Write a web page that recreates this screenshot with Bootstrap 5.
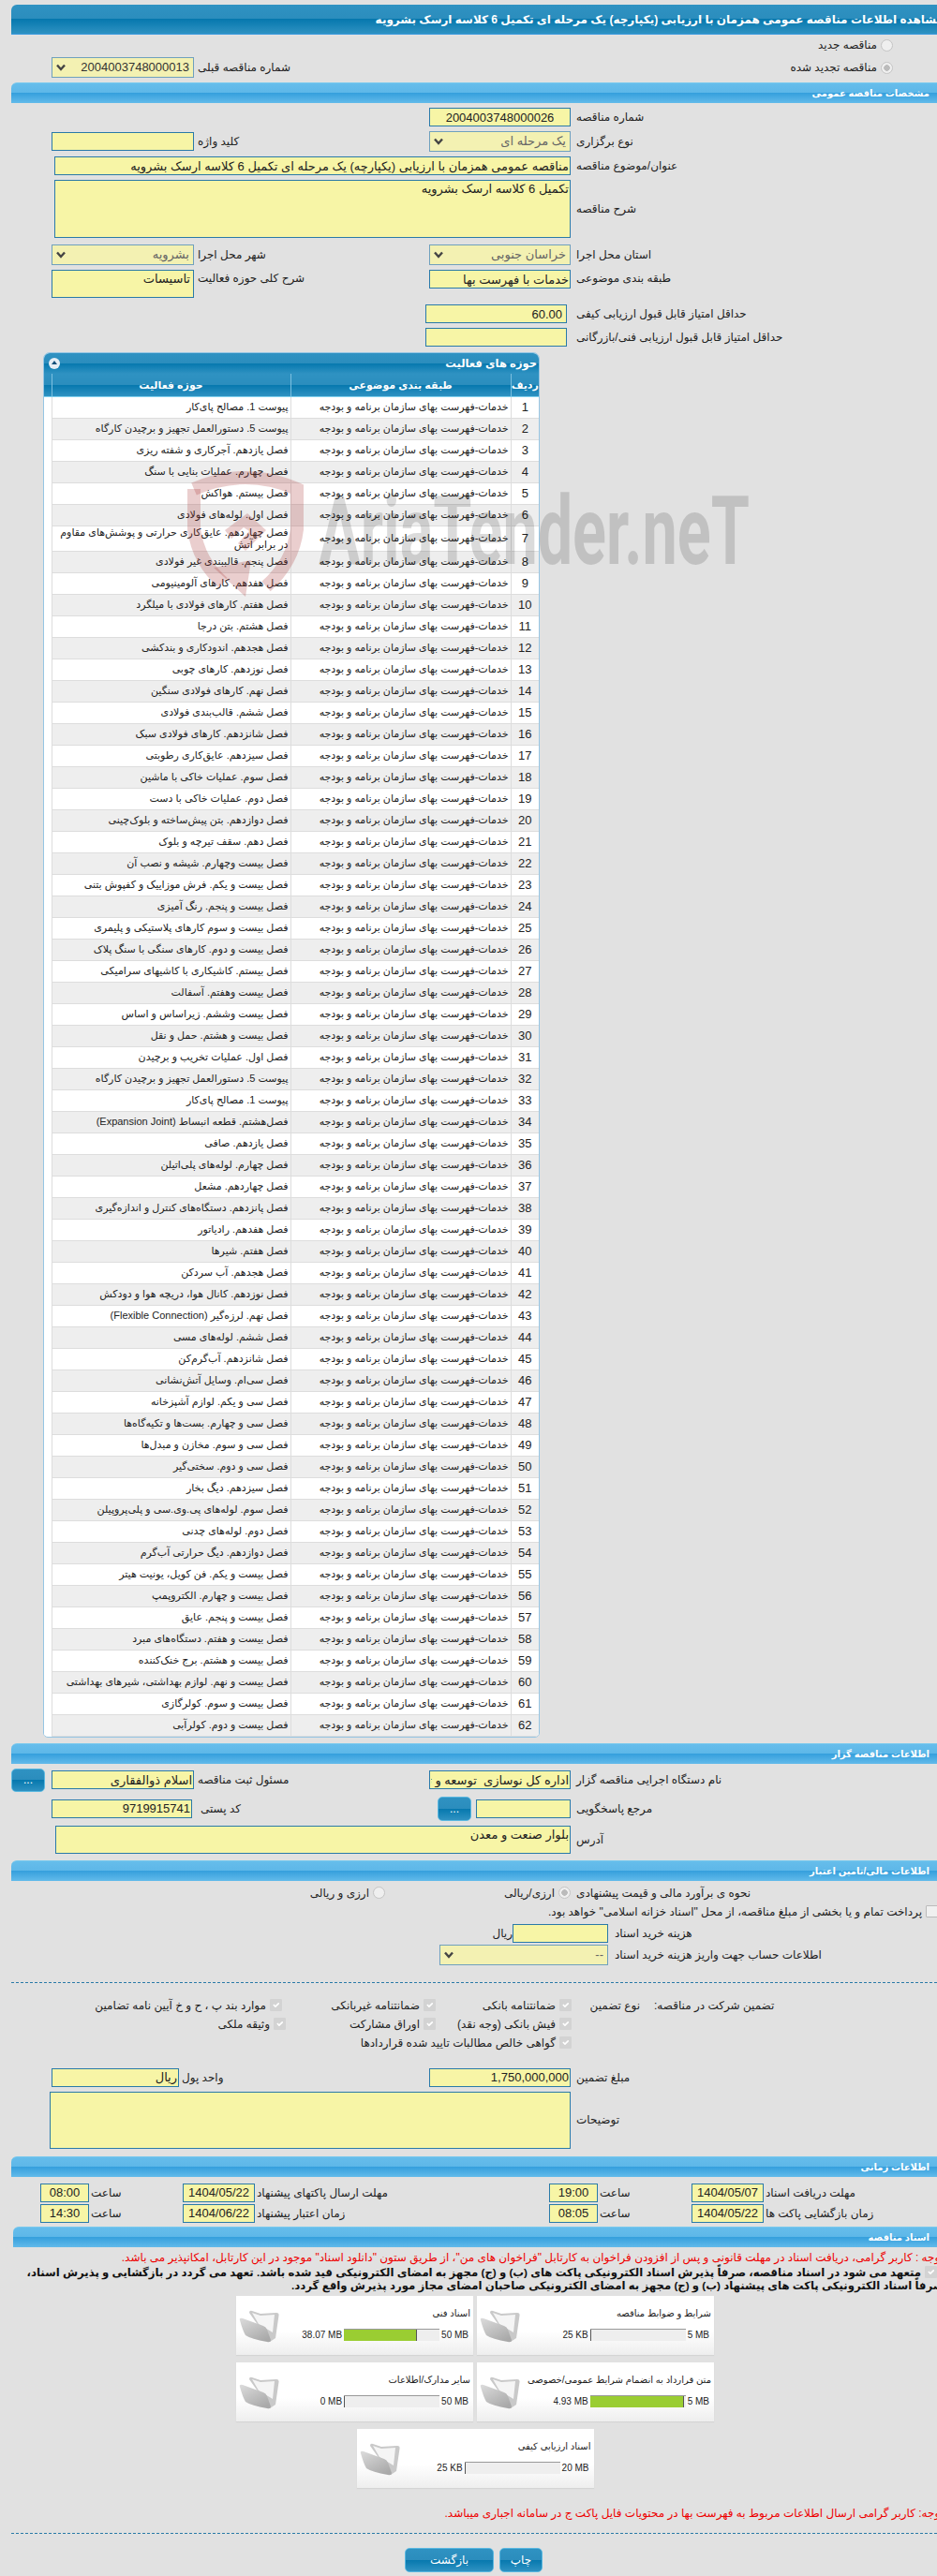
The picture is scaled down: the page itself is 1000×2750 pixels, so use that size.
<!DOCTYPE html>
<html lang="fa" dir="rtl">
<head>
    <meta charset="UTF-8">
    <meta name="viewport" content="width=device-width, initial-scale=1.0">
    <title>مشاهده اطلاعات مناقصه</title>
    <link rel="stylesheet" href="https://cdn.jsdelivr.net/npm/bootstrap@5.3.3/dist/css/bootstrap.min.css">
    <style>
        body { background: #e1e1e1; font-family: "Liberation Sans", "DejaVu Sans", sans-serif; font-size: 12px; color: #222; overflow-x: hidden; }
        .sheet { margin-left: 12px; padding-top: 5px; height: 2750px; overflow: hidden; }

        .bar-dark, .bar-light, .btn-site, .grid-head th, .panel-title { color: #fff; font-weight: bold; }
        .bar-dark, .grid-head th, .panel-title, .btn-site { background: linear-gradient(#2f92c2 0, #2b8dbd 49%, #0678ae 50%, #2f92c2 100%); }
        .bar-light { background: linear-gradient(#66bdeb 0, #5db7e8 49%, #36a0dd 50%, #62baea 100%); border-top: 1px solid #78c9ee; height: 22px; line-height: 21px; padding-right: 8px; border-radius: 6px 0 0 0; font-size: 10px; }
        .bar-dark { height: 32px; line-height: 32px; border-radius: 6px 0 0 0; font-size: 12px; white-space: nowrap; border-bottom: 1px solid #3a9be0; }
        .bar-docs { margin-left: 2px; }

        .frm-row { display: flex; align-items: center; }
        .lbl { margin: 0; text-align: left; flex: none; white-space: nowrap; }
        .la { width: 391px; padding-left: 6px; }
        .lb { width: 251px; padding-left: 4px; }
        .fld.form-control, .fld.form-select { flex: none; height: 20px; min-height: 0; padding: 0 1px; border-radius: 0; border: 1px solid #2a7aa8; background-color: #f7f5a6; color: #222; font-size: 13px; line-height: 18px; box-shadow: none; opacity: 1; }
        textarea.fld.form-control { resize: none; }
        .fld.form-select { height: 22px; padding: 0 4px 0 16px; border-color: #6fa0bd; background-color: #f3f1b2; color: #666; background-size: 12px 10px; background-position: left 3px center; background-image: url("data:image/svg+xml,%3csvg xmlns='http://www.w3.org/2000/svg' viewBox='0 0 12 10'%3e%3cpath fill='none' stroke='%23444' stroke-width='2.4' d='M2 2.5l4 4.5 4-4.5'/%3e%3c/svg%3e"); }
        .w52 { width: 52px; } .w77 { width: 77px; } .w101 { width: 101px; } .w102 { width: 102px; } .w136 { width: 136px; } .w150 { width: 150px; }
        .w151 { width: 151px; } .w152 { width: 152px; } .w180 { width: 180px; } .w550 { width: 550px; } .w551 { width: 551px; } .w556 { width: 556px; }
        .lbl-time { width: 100px; padding-left: 2px; }

        .rad.form-check-input, .tick.form-check-input { flex: none; margin: 0; width: 13px; height: 13px; opacity: 1; background-color: #efefef; border: 1px solid #c4c4c4; }
        .rad.form-check-input:checked { background-image: radial-gradient(#bbb 0 3px, #efefef 3.5px); }
        .tick.form-check-input { border-radius: 1px; background-color: #d3d3d3; border-color: #d3d3d3; }
        .tick.plain.form-check-input { background-color: #f0f0f0; border-color: #bbb; }

        .btn-site { border: 1px solid #5ab8e0; border-radius: 5px; padding: 0; font-size: 12px; font-weight: normal; flex: none; }
        .btn-site:hover { color: #fff; }
        .dots { width: 36px; height: 25px; }

        .t2 { margin-top: 2px; } .t3 { margin-top: 3px; } .t4 { margin-top: 4px; } .t5 { margin-top: 5px; } .t6 { margin-top: 6px; } .t7 { margin-top: 7px; } .t8 { margin-top: 8px; }
        .t12 { margin-top: 12px; } .t14 { margin-top: 14px; } .t15 { margin-top: 15px; } .t17 { margin-top: 17px; } .t18 { margin-top: 18px; }
        .hh20 { height: 20px; } .hh22 { height: 22px; } .hh25 { height: 25px; } .hh26 { height: 26px; }
        .dash { border-top: 1px dashed #2a7aa8; }

        .panel-box { width: 530px; margin-right: 424px; border: 1px solid #96c5e3; border-radius: 7px 7px 5px 5px; background: #fff; overflow: hidden; }
        .panel-title { height: 22px; line-height: 21px; padding-right: 2px; display: flex; justify-content: space-between; align-items: center; font-size: 11.5px; }
        .knob { width: 12px; height: 12px; margin-left: 5px; border-radius: 50%; background: #e6eef5; position: relative; }
        .knob::after { content: ""; position: absolute; left: 3px; top: 3px; border: 3px solid transparent; border-top: 0; border-bottom: 4px solid #15507a; }
        .grid-tbl { table-layout: fixed; width: 528px; margin: 0; border-collapse: collapse; font-size: 11px; }
        .grid-head th { height: 24px; padding: 0; text-align: center; white-space: nowrap; border-left: 1px solid #7cc0e0; border-bottom: 1px solid #7fd0ee; vertical-align: middle; font-size: 11px; }
        .grid-head th:last-child { border-left: 0; }
        .grid-tbl td { height: 23px; padding: 0 2px; line-height: 13px; border-bottom: 1px solid #ddd; border-left: 1px solid #ddd; background: #fff; }
        .grid-tbl tr:nth-child(even) td { background: #eee; }
        .grid-tbl td.num { text-align: center; font-size: 13px; }
        .grid-tbl tr td.edge { background: #fff; border: 0; }

        .chk-head { width: 302px; text-align: left; flex: none; }
        .chk-type { width: 88px; padding-right: 15px; flex: none; }
        .chk-gap { width: 390px; flex: none; }
        .chk-item { display: flex; align-items: center; gap: 4px; flex: none; white-space: nowrap; }
        .c145 { width: 145px; } .c160 { width: 160px; } .c164 { width: 164px; }

        .cut-right { display: block; margin-right: -7px; }
        .note-red { color: #e00; white-space: nowrap; line-height: 18px; }
        .note-bold { font-weight: bold; font-size: 11.7px; line-height: 14px; color: #111; white-space: nowrap; }
        .note-bold .tick { display: inline-block; vertical-align: -2px; margin-left: 4px; }
        .doc-wrap { display: flex; flex-wrap: wrap; justify-content: center; gap: 8px 4px; width: 510px; margin-right: 238px; margin-top: 4px; }
        .doc-card { width: 253px; height: 63px; background: linear-gradient(#fff 0, #fff 60%, #eee 100%); box-shadow: 0 1px 1px #d4d4d4; position: relative; padding: 12px 3px 0 0; font-size: 10px; line-height: 14px; }
        .doc-meter { display: flex; align-items: center; margin-top: 9px; padding-right: 2px; gap: 2px; }
        .doc-meter .ends { direction: ltr; white-space: nowrap; }
        .doc-bar.progress { width: 102px; height: 13px; border-radius: 0; background: #eee; border-top: 1px solid #999; flex: none; }
        .doc-bar .progress-bar { background: #9acd32; border-right: 1px solid #555; }
        .doc-folder { position: absolute; left: 3px; top: 13px; }
        .btn-back { width: 95px; height: 26px; }
        .btn-print { width: 46px; height: 26px; margin-right: 421px; }
        .foot-btns { display: flex; gap: 6px; }

        .water { position: absolute; left: 0; top: 0; pointer-events: none; }
        .water text { font-family: Roboto, sans-serif; font-weight: 700; }
    </style>
</head>
<body onload="displayRows(); displayDocs();">
    <div class="sheet">
        <div class="bar-dark"><span class="cut-right">مشاهده اطلاعات مناقصه عمومی همزمان با ارزیابی (یکپارچه) یک مرحله ای تکمیل 6 کلاسه ارسک بشرویه</span></div>

        <div class="frm-row hh22">
            <div class="chk-item" style="margin-right:47px"><input class="rad form-check-input" type="radio" disabled><span>مناقصه جدید</span></div>
        </div>
        <div class="frm-row hh22 t2">
            <div class="chk-item" style="margin-right:47px;width:344px"><input class="rad form-check-input" type="radio" checked disabled><span>مناقصه تجدید شده</span></div>
            <div class="lbl" style="width:402px;padding-left:4px">شماره مناقصه قبلی</div>
            <select class="fld form-select w152" disabled style="color:#333"><option>2004003748000013</option></select>
        </div>

        <div class="bar-light t5">مشخصات مناقصه عمومی</div>

        <div class="frm-row hh20 t5"><label class="lbl la">شماره مناقصه</label><input class="fld form-control w151 text-center" value="2004003748000026"></div>
        <div class="frm-row hh22 t5">
            <label class="lbl la">نوع برگزاری</label><select class="fld form-select w151" disabled><option>یک مرحله ای</option></select>
            <label class="lbl lb">کلید واژه</label><input class="fld form-control w152">
        </div>
        <div class="frm-row hh20 t5"><label class="lbl la">عنوان/موضوع مناقصه</label><input class="fld form-control w551" value="مناقصه عمومی همزمان با ارزیابی (یکپارچه) یک مرحله ای تکمیل 6 کلاسه ارسک بشرویه"></div>
        <div class="frm-row t5"><label class="lbl la">شرح مناقصه</label><textarea class="fld form-control w551" style="height:62px">تکمیل 6 کلاسه ارسک بشرویه</textarea></div>
        <div class="frm-row hh22 t7">
            <label class="lbl la">استان محل اجرا</label><select class="fld form-select w151" disabled><option>خراسان جنوبی</option></select>
            <label class="lbl lb">شهر محل اجرا</label><select class="fld form-select w152" disabled><option>بشرویه</option></select>
        </div>
        <div class="frm-row t5 align-items-start">
            <label class="lbl la">طبقه بندی موضوعی</label><input class="fld form-control w151" value="خدمات با فهرست بها">
            <label class="lbl lb">شرح کلی حوزه فعالیت</label><textarea class="fld form-control w152" style="height:30px;padding-right:3px">تاسیسات</textarea>
        </div>
        <div class="frm-row hh20 t7"><label class="lbl" style="width:395px;padding-left:10px">حداقل امتیاز قابل قبول ارزیابی کیفی</label><input class="fld form-control w151 px-1" value="60.00"></div>
        <div class="frm-row hh20 t5"><label class="lbl" style="width:395px;padding-left:10px">حداقل امتیاز قابل قبول ارزیابی فنی/بازرگانی</label><input class="fld form-control w151"></div>

        <div class="panel-box t6">
            <div class="panel-title"><span>حوزه های فعالیت</span><span class="knob"></span></div>
            <table class="grid-tbl">
                <colgroup><col style="width:30px"><col style="width:235px"><col style="width:255px"><col></colgroup>
                <thead class="grid-head"><tr><th>ردیف</th><th>طبقه بندی موضوعی</th><th>حوزه فعالیت</th><th></th></tr></thead>
                <tbody id="activityRows"></tbody>
            </table>
        </div>

        <div class="bar-light t6">اطلاعات مناقصه گزار</div>

        <div class="frm-row hh25 t5">
            <label class="lbl la">نام دستگاه اجرایی مناقصه گزار</label><input class="fld form-control w151" value="اداره کل نوسازی  توسعه و تجهیز مدارس">
            <label class="lbl lb">مسئول ثبت مناقصه</label><input class="fld form-control w152" value="اسلام ذوالفقاری">
            <button class="btn btn-site dots" style="margin-right:7px">...</button>
        </div>
        <div class="frm-row hh26 t5">
            <label class="lbl la">مرجع پاسخگویی</label><input class="fld form-control w101">
            <button class="btn btn-site dots" style="margin-right:5px;height:26px">...</button>
            <label class="lbl" style="width:262px;padding-left:9px">کد پستی</label><input class="fld form-control w150" value="9719915741">
        </div>
        <div class="frm-row t5"><label class="lbl la">آدرس</label><textarea class="fld form-control w550" style="height:30px">بلوار صنعت و معدن</textarea></div>

        <div class="bar-light t7">اطلاعات مالی/تامین اعتبار</div>

        <div class="frm-row hh20 t3">
            <label class="lbl la">نحوه ی برآورد مالی و قیمت پیشنهادی</label>
            <div class="chk-item" style="width:198px"><input class="rad form-check-input" type="radio" checked disabled><span>ارزی/ریالی</span></div>
            <div class="chk-item"><input class="rad form-check-input" type="radio" disabled><span>ارزی و ریالی</span></div>
        </div>
        <div class="frm-row hh20">
            <div class="chk-item" style="margin-right:-1px"><input class="tick plain form-check-input" type="checkbox" disabled><span>پرداخت تمام و یا بخشی از مبلغ مناقصه، از محل "اسناد خزانه اسلامی" خواهد بود.</span></div>
        </div>
        <div class="frm-row hh20 t3">
            <label class="lbl" style="width:351px;padding-left:7px">هزینه خرید اسناد</label><input class="fld form-control w102"><span>ریال</span>
        </div>
        <div class="frm-row hh22 t2">
            <label class="lbl" style="width:351px;padding-left:7px">اطلاعات حساب جهت واریز هزینه خرید اسناد</label><select class="fld form-select w180" disabled><option>--</option></select>
        </div>
        <div class="dash t18"></div>

        <div class="frm-row hh20 t14">
            <div class="chk-head">تضمین شرکت در مناقصه:</div><div class="chk-type">نوع تضمین</div>
            <div class="chk-item c145"><input class="tick form-check-input" type="checkbox" checked disabled><span>ضمانتنامه بانکی</span></div>
            <div class="chk-item c164"><input class="tick form-check-input" type="checkbox" checked disabled><span>ضمانتنامه غیربانکی</span></div>
            <div class="chk-item"><input class="tick form-check-input" type="checkbox" checked disabled><span>موارد بند پ ، ح و خ آیین نامه تضامین</span></div>
        </div>
        <div class="frm-row hh20">
            <div class="chk-gap"></div>
            <div class="chk-item c145"><input class="tick form-check-input" type="checkbox" checked disabled><span>فیش بانکی (وجه نقد)</span></div>
            <div class="chk-item c160"><input class="tick form-check-input" type="checkbox" checked disabled><span>اوراق مشارکت</span></div>
            <div class="chk-item"><input class="tick form-check-input" type="checkbox" checked disabled><span>وثیقه ملکی</span></div>
        </div>
        <div class="frm-row hh20">
            <div class="chk-gap"></div>
            <div class="chk-item"><input class="tick form-check-input" type="checkbox" checked disabled><span>گواهی خالص مطالبات تایید شده قراردادها</span></div>
        </div>

        <div class="frm-row hh20 t17">
            <label class="lbl la">مبلغ تضمین</label><input class="fld form-control w151" value="1,750,000,000">
            <label class="lbl" style="width:267px;padding-left:3px">واحد پول</label><input class="fld form-control w136" value="ریال">
        </div>
        <div class="frm-row t5"><label class="lbl la">توضیحات</label><textarea class="fld form-control w556" style="height:61px"></textarea></div>

        <div class="bar-light t8">اطلاعات زمانی</div>

        <div class="frm-row hh20 t7">
            <label class="lbl" style="width:185px;padding-left:2px">مهلت دریافت اسناد</label><input class="fld form-control w77 text-center" value="1404/05/07">
            <label class="lbl lbl-time">ساعت</label><input class="fld form-control w52 text-center" value="19:00">
            <label class="lbl" style="width:314px;padding-left:2px">مهلت ارسال پاکتهای پیشنهاد</label><input class="fld form-control w77 text-center" value="1404/05/22">
            <label class="lbl lbl-time">ساعت</label><input class="fld form-control w52 text-center" value="08:00">
        </div>
        <div class="frm-row hh20 t2">
            <label class="lbl" style="width:185px;padding-left:2px">زمان بازگشایی پاکت ها</label><input class="fld form-control w77 text-center" value="1404/05/22">
            <label class="lbl lbl-time">ساعت</label><input class="fld form-control w52 text-center" value="08:05">
            <label class="lbl" style="width:314px;padding-left:2px">زمان اعتبار پیشنهاد</label><input class="fld form-control w77 text-center" value="1404/06/22">
            <label class="lbl lbl-time">ساعت</label><input class="fld form-control w52 text-center" value="14:30">
        </div>

        <div class="bar-light bar-docs t4">اسناد مناقصه</div>

        <div class="note-red t2 cut-right">توجه : کاربر گرامی، دریافت اسناد در مهلت قانونی و پس از افزودن فراخوان به کارتابل "فراخوان های من"، از طریق ستون "دانلود اسناد" موجود در این کارتابل، امکانپذیر می باشد.</div>
        <div class="note-bold"><input class="tick form-check-input" type="checkbox" checked disabled>متعهد می شود در اسناد مناقصه، صرفاً پذیرش اسناد الکترونیکی پاکت های (ب) و (ج) مجهز به امضای الکترونیکی قید شده باشد. تعهد می گردد در بازگشایی و پذیرش اسناد،<span class="cut-right">صرفاً اسناد الکترونیکی پاکت های پیشنهاد (ب) و (ج) مجهز به امضای الکترونیکی صاحبان امضای مجاز مورد پذیرش واقع گردد.</span></div>

        <div id="docCards" class="doc-wrap"></div>

        <div class="note-red t18 cut-right">توجه: کاربر گرامی ارسال اطلاعات مربوط به فهرست بها در محتویات فایل پاکت ج در سامانه اجباری میباشد.</div>
        <div class="dash t12"></div>

        <div class="foot-btns t15">
            <button class="btn btn-site btn-print">چاپ</button>
            <button class="btn btn-site btn-back">بازگشت</button>
        </div>
    </div>

    <svg class="water" width="820" height="660">
        <g fill="none" stroke="#a83232" stroke-opacity=".24" stroke-width="14">
            <path d="M207 522 Q262 498 317 522 L317 565 Q313 600 284 626"/>
            <path d="M207 522 L207 565 Q212 600 238 622"/>
        </g>
        <path d="M228 606 L262 637 L268 598 Z" fill="#a83232" fill-opacity=".24"/>
        <path d="M240 566 L264 548 L284 566 L262 588 L254 580 L266 567 L260 563 L247 575 Z" fill="#a83232" fill-opacity=".24"/>
        <text x="340" y="602" font-size="102" fill="#000" fill-opacity=".14" direction="ltr" textLength="460" lengthAdjust="spacingAndGlyphs">AriaTender.neT</text>
    </svg>

    <script>
        var activities = [
            "پیوست 1. مصالح پای‌کار",
            "پیوست 5. دستورالعمل تجهیز و برچیدن کارگاه",
            "فصل یازدهم. آجرکاری و شفته ریزی",
            "فصل چهارم. عملیات بنایی با سنگ",
            "فصل بیستم. هواکش",
            "فصل اول. لوله‌های فولادی",
            "فصل چهاردهم. عایق‌کاری حرارتی و پوشش‌های مقاوم در برابر آتش",
            "فصل پنجم. قالببندی غیر فولادی",
            "فصل هفدهم. کارهای آلومینیومی",
            "فصل هفتم. کارهای فولادی با میلگرد",
            "فصل هشتم. بتن درجا",
            "فصل هجدهم. اندودکاری و بندکشی",
            "فصل نوزدهم. کارهای چوبی",
            "فصل نهم. کارهای فولادی سنگین",
            "فصل ششم. قالب‌بندی فولادی",
            "فصل شانزدهم. کارهای فولادی سبک",
            "فصل سیزدهم. عایق‌کاری رطوبتی",
            "فصل سوم. عملیات خاکی با ماشین",
            "فصل دوم. عملیات خاکی با دست",
            "فصل دوازدهم. بتن پیش‌ساخته و بلوک‌چینی",
            "فصل دهم. سقف تیرچه و بلوک",
            "فصل بیست وچهارم. شیشه و نصب آن",
            "فصل بیست و یکم. فرش موزاییک و کفپوش بتنی",
            "فصل بیست و پنجم. رنگ آمیزی",
            "فصل بیست و سوم کارهای پلاستیکی و پلیمری",
            "فصل بیست و دوم. کارهای سنگی با سنگ پلاک",
            "فصل بیستم. کاشیکاری با کاشیهای سرامیکی",
            "فصل بیست وهفتم. آسفالت",
            "فصل بیست وششم. زیراساس و اساس",
            "فصل بیست و هشتم. حمل و نقل",
            "فصل اول. عملیات تخریب و برچیدن",
            "پیوست 5. دستورالعمل تجهیز و برچیدن کارگاه",
            "پیوست 1. مصالح پای‌کار",
            "فصل‌هشتم. قطعه انبساط (Expansion Joint)",
            "فصل یازدهم. صافی",
            "فصل چهارم. لوله‌های پلی‌اتیلن",
            "فصل چهاردهم. مشعل",
            "فصل پانزدهم. دستگاه‌های کنترل و اندازه‌گیری",
            "فصل هفدهم. رادیاتور",
            "فصل هفتم. شیرها",
            "فصل هجدهم. آب سردکن",
            "فصل نوزدهم. کانال هوا، دریچه هوا و دودکش",
            "فصل نهم. لرزه‌گیر (Flexible Connection)",
            "فصل ششم. لوله‌های مسی",
            "فصل شانزدهم. آب‌گرم‌کن",
            "فصل سی‌ام. وسایل آتش‌نشانی",
            "فصل سی و یکم. لوازم آشپزخانه",
            "فصل سی و چهارم. بست‌ها و تکیه‌گاه‌ها",
            "فصل سی و سوم. مخازن و مبدل‌ها",
            "فصل سی و دوم. سختی‌گیر",
            "فصل سیزدهم. دیگ بخار",
            "فصل سوم. لوله‌های پی.وی.سی و پلی‌پروپیلن",
            "فصل دوم. لوله‌های چدنی",
            "فصل دوازدهم. دیگ حرارتی آب‌گرم",
            "فصل بیست و یکم. فن کویل، یونیت هیتر",
            "فصل بیست و چهارم. الکتروپمپ",
            "فصل بیست و پنجم. عایق",
            "فصل بیست و هفتم. دستگاه‌های مبرد",
            "فصل بیست و هشتم. برج خنک‌کننده",
            "فصل بیست و نهم. لوازم بهداشتی، شیرهای بهداشتی",
            "فصل بیست و سوم. کولرگازی",
            "فصل بیست و دوم. کولرآبی"
        ];

        var docs = [
            { name: "شرایط و ضوابط مناقصه", used: "25 KB", max: "5 MB", pct: 0.5 },
            { name: "اسناد فنی", used: "38.07 MB", max: "50 MB", pct: 76.1 },
            { name: "متن قرارداد به انضمام شرایط عمومی/خصوصی", used: "4.93 MB", max: "5 MB", pct: 98.6 },
            { name: "سایر مدارک/اطلاعات", used: "0 MB", max: "50 MB", pct: 0 },
            { name: "اسناد ارزیابی کیفی", used: "25 KB", max: "20 MB", pct: 0.1 }
        ];

        var folderIcon = `
            <svg class="doc-folder" width="43" height="37" viewBox="0 0 43 37">
                <defs>
                    <linearGradient id="flapFill" x1="0" y1="0" x2="0.7" y2="1"><stop offset="0" stop-color="#dcdcdc"/><stop offset="1" stop-color="#a9a9a9"/></linearGradient>
                </defs>
                <path d="M11 5 Q11 2 14 3 L23 6 L40 5 Q43 5 42.5 8 L39 32 L33 36 Z" fill="#c9c9c9"/>
                <path d="M14 5 L23 8 L38 7 L36 26 L21 17 Z" fill="#f5f5f5"/>
                <path d="M1 13 Q0 10 4 11 L26 19 Q29 20 30 23 L34 34 Q34 37 30 36 Q13 33 7 29 Q4 24 1 13 Z" fill="url(#flapFill)"/>
            </svg>`;

        function displayRows() {
            var tableBody = document.getElementById("activityRows");
            tableBody.innerHTML = "";
            activities.forEach(function(activity, i) {
                tableBody.innerHTML += `
                    <tr>
                        <td class="num">${i + 1}</td>
                        <td>خدمات-فهرست بهای سازمان برنامه و بودجه</td>
                        <td>${activity}</td>
                        <td class="edge"></td>
                    </tr>`;
            });
        }

        function displayDocs() {
            var docContainer = document.getElementById("docCards");
            docContainer.innerHTML = "";
            docs.forEach(function(doc) {
                docContainer.innerHTML += `
                    <div class="doc-card">
                        <div>${doc.name}</div>
                        <div class="doc-meter">
                            <span class="ends">${doc.max}</span>
                            <div class="doc-bar progress" dir="ltr"><div class="progress-bar" style="width:${doc.pct}%"></div></div>
                            <span class="ends">${doc.used}</span>
                        </div>
                        ${folderIcon}
                    </div>`;
            });
        }
    </script>
</body>
</html>
